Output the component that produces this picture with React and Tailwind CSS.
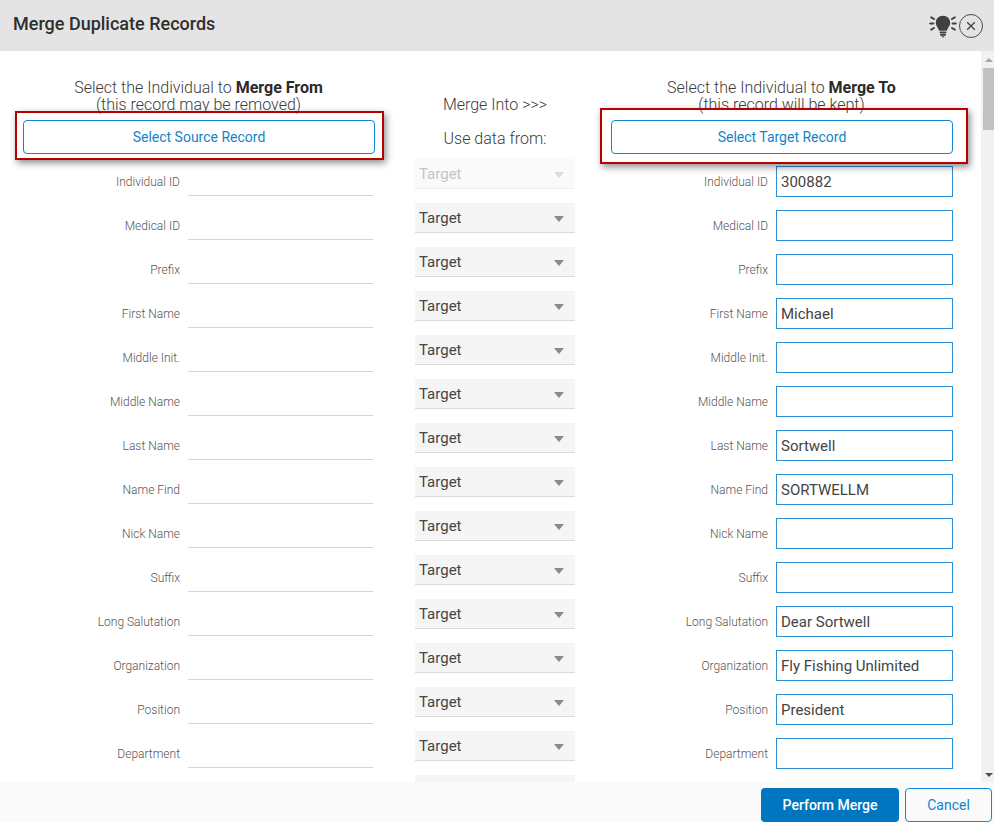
const rows = [
  ["Individual ID", "300882"],
  ["Medical ID", ""],
  ["Prefix", ""],
  ["First Name", "Michael"],
  ["Middle Init.", ""],
  ["Middle Name", ""],
  ["Last Name", "Sortwell"],
  ["Name Find", "SORTWELLM"],
  ["Nick Name", ""],
  ["Suffix", ""],
  ["Long Salutation", "Dear Sortwell"],
  ["Organization", "Fly Fishing Unlimited"],
  ["Position", "President"],
  ["Department", ""],
];

function Bulb() {
  return (
    <svg width="28" height="24" viewBox="0 0 28 24" className="mr-[2px]">
      <path d="M14 1.8c-4.3 0-7.2 3-7.2 6.9 0 3.4 2.6 4.9 3.2 8h8c.6-3.1 3.2-4.6 3.2-8 0-3.9-2.9-6.9-7.2-6.9z" fill="#404040" />
      <rect x="10.6" y="17.5" width="6.8" height="1.9" rx="0.8" fill="#404040" />
      <rect x="11" y="20" width="6" height="1.7" rx="0.8" fill="#404040" />
      <path d="M12.2 22.2h3.6l-1.8 1.6z" fill="#404040" />
      <g stroke="#404040" strokeWidth="2" strokeLinecap="round">
        <path d="M1.2 9.5h3.2M23.6 9.5h3.2M2.2 3.4l2.8 1.6M25.8 3.4l-2.8 1.6M2.2 15.6l2.8-1.6M25.8 15.6l-2.8-1.6" />
      </g>
    </svg>
  );
}

function Caret({ disabled }) {
  return (
    <span className={`relative top-[1px] w-0 h-0 border-x-[5.5px] border-x-transparent border-t-[6px] ${disabled ? "border-t-[#dcdcdc]" : "border-t-[#8a8a8a]"}`} />
  );
}

function Select({ disabled, label = "Target" }) {
  return (
    <div className={`h-[30px] mb-[14px] flex items-center justify-between pl-[4px] pr-[11px] border-b ${disabled ? "bg-[#fafafa] border-b-[#f0f0f0] text-[#c4c4c4]" : "bg-[#f5f5f5] border-b-[#d9d9d9] text-[#444]"} text-[15px]`}>
      <span className="relative top-[1px]">{label}</span>
      <Caret disabled={disabled} />
    </div>
  );
}

export default function App() {
  return (
    <div className="w-[994px] h-[822px] overflow-hidden flex flex-col bg-white text-[#333] font-['Roboto',sans-serif]">
      <header className="h-[51px] shrink-0 bg-[#e4e4e4] flex items-center justify-between pl-[13px] pr-[11px]">
        <h1 className="text-[18px] font-medium text-[#2f2f2f] relative top-[-2px]">Merge Duplicate Records</h1>
        <div className="flex items-center">
          <Bulb />
          <button className="w-[24px] h-[24px] rounded-full border border-[#4a4a4a] flex items-center justify-center">
            <svg width="10" height="10" viewBox="0 0 10 10">
              <path d="M1.2 1.2l7.6 7.6M8.8 1.2L1.2 8.8" stroke="#404040" strokeWidth="1.3" />
            </svg>
          </button>
        </div>
      </header>

      <div className="flex-1 min-h-0 flex overflow-hidden">
        <div className="w-[981px] flex">
          {/* Source column */}
          <section className="w-[397px] shrink-0">
            <div className="pt-[28px] h-[60px] text-center text-[16px] leading-[17px] font-light text-[#3c3c3c]">
              <p>Select the Individual to <b className="font-bold text-[#2b2b2b]">Merge From</b></p>
              <p>(this record may be removed)</p>
            </div>
            <div className="ml-[15px] w-[369px] h-[49px] border-[2px] border-[#b90000] shadow-[2px_3px_7px_rgba(0,0,0,0.45)] px-[6px] pt-[7px] relative">
              <button className="block w-[352px] h-[34px] rounded-[4px] border border-[#0f8ad2] bg-white text-[#1583c9] text-[14px]">Select Source Record</button>
            </div>
            <div className="pt-[6px]">
              {rows.map(([label]) => (
                <div key={label} className="h-[44px] flex">
                  <div className="w-[181px] pr-[1px] text-right text-[12px] font-light text-[#555] pt-[7px]">{label}</div>
                  <div className="ml-[7px] w-[185px] h-[30px] border-b border-b-[#d4d4d4]" />
                </div>
              ))}
            </div>
          </section>

          {/* Middle column */}
          <section className="w-[196px] shrink-0 pl-[18px] pr-[18px]">
            <div className="h-[108px] text-center text-[16px] font-light text-[#3c3c3c]">
              <p className="pt-[43px] leading-[22px]">Merge Into &gt;&gt;&gt;</p>
              <p className="pt-[12px] leading-[22px]">Use data from:</p>
            </div>
            {Array.from({ length: 15 }, (_, i) => (
              <Select key={i} disabled={i === 0} label={i === 14 ? "" : "Target"} />
            ))}
          </section>

          {/* Target column */}
          <section className="w-[388px] shrink-0">
            <div className="pt-[28px] h-[57px] w-[377px] text-center text-[16px] leading-[17px] font-light text-[#3c3c3c]">
              <p>Select the Individual to <b className="font-bold text-[#2b2b2b]">Merge To</b></p>
              <p>(this record will be kept)</p>
            </div>
            <div className="ml-[7px] w-[368px] h-[56px] border-[2px] border-[#b90000] shadow-[2px_3px_7px_rgba(0,0,0,0.45)] pl-[9px] pt-[10px] relative">
              <button className="block w-[342px] h-[34px] rounded-[4px] border border-[#0f8ad2] bg-white text-[#1583c9] text-[14px]">Select Target Record</button>
            </div>
            <div className="pt-[2px]">
              {rows.map(([label, value]) => (
                <div key={label} className="h-[44px] flex">
                  <div className="w-[176px] pr-[1px] text-right text-[12px] font-light text-[#555] pt-[7px]">{label}</div>
                  <div className="ml-[7px] w-[177px] h-[31px] border border-[#2d8fd5] bg-white pl-[4px] text-[15px] leading-[31px] text-[#444]">{value}</div>
                </div>
              ))}
            </div>
          </section>
        </div>

        {/* Scrollbar */}
        <div className="w-[13px] shrink-0 bg-[#f1f1f1] flex flex-col items-end">
          <div className="w-[11px] h-[17px] flex items-center justify-center">
            <span className="w-0 h-0 border-x-[4px] border-x-transparent border-b-[4px] border-b-[#a6a6a6]" />
          </div>
          <div className="w-[11px] h-[62px] bg-[#c1c1c1]" />
          <div className="flex-1" />
          <div className="w-[11px] h-[15px] flex items-center justify-center">
            <span className="w-0 h-0 border-x-[4px] border-x-transparent border-t-[4px] border-t-[#505050]" />
          </div>
        </div>
      </div>

      <footer className="h-[40px] shrink-0 bg-[#fafafa] flex justify-end pr-[2px] pt-[6px] gap-[6px]">
        <button className="w-[138px] h-[34px] rounded-[4px] bg-[#0076c0] text-white text-[14px] font-medium">Perform Merge</button>
        <button className="w-[87px] h-[34px] rounded-[4px] border border-[#0f8ad2] bg-[#fafafa] text-[#1583c9] text-[14px]">Cancel</button>
      </footer>
    </div>
  );
}
